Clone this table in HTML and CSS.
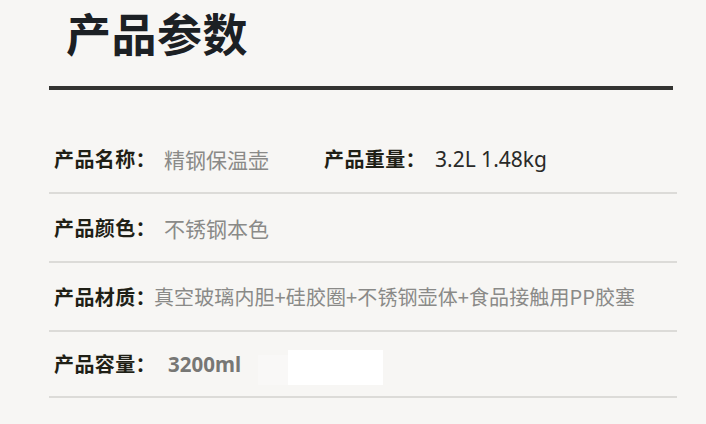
FILE: index.html
```html
<!DOCTYPE html>
<html lang="zh-CN">
<head>
<meta charset="utf-8">
<title>产品参数</title>
<link rel="stylesheet" href="styles.css">
</head>
<body>
<div class="page">
  <h1 class="title">产品参数</h1>
  <div class="rule"></div>
  <div class="rows">
    <div class="row">
      <div class="pair pair-first">
        <span class="label">产品名称：</span><span class="value">精钢保温壶</span>
      </div>
      <div class="pair">
        <span class="label">产品重量：</span><span class="value num">3.2L 1.48kg</span>
      </div>
    </div>
    <div class="row">
      <span class="label">产品颜色：</span><span class="value">不锈钢本色</span>
    </div>
    <div class="row">
      <span class="label">产品材质：</span><span class="value tight">真空玻璃内胆+硅胶圈+不锈钢壶体+食品接触用PP胶塞</span>
    </div>
    <div class="row row-last">
      <span class="label">产品容量：</span><span class="value bold">3200ml</span>
      <span class="patch-faint"></span><span class="patch-white"></span>
    </div>
  </div>
</div>
</body>
</html>
```
FILE: styles.css
```css
html, body {
  margin: 0;
  padding: 0;
}
body {
  background: #f7f6f4;
  font-family: "Noto Sans CJK SC", "Noto Sans", sans-serif;
  width: 706px;
  height: 424px;
  overflow: hidden;
}
.page {
  padding: 0 29px 0 49px;
}
.title {
  margin: 0;
  padding: 10px 0 0 17px;
  font-size: 45px;
  line-height: 46px;
  font-weight: 700;
  color: #1c2024;
  letter-spacing: 0.5px;
}
.rule {
  margin-top: 30px;
  width: 624px;
  height: 4px;
  background: #333331;
}
.rows {
  margin-top: 35px;
}
.row {
  display: flex;
  align-items: center;
  height: 67px;
  border-bottom: 2px solid #dcdbd8;
  padding-left: 5px;
  font-size: 20px;
  line-height: 24px;
}
.row-last {
  height: 64px;
}
.pair {
  display: flex;
  align-items: center;
}
.pair-first {
  width: 270px;
}
.label {
  font-weight: 700;
  color: #1f1f16;
  letter-spacing: 0.4px;
}
.value {
  color: #8a8a88;
  margin-left: 8px;
  font-size: 21px;
}
.value.tight {
  margin-left: -2px;
  font-size: 20px;
  letter-spacing: 0.1px;
}
.value.num {
  font-family: "Noto Sans", sans-serif;
  color: #2a2a28;
  margin-left: 9px;
  font-size: 21px;
}
.value.bold {
  font-family: "Noto Sans", sans-serif;
  font-weight: 700;
  color: #777775;
  margin-left: 12px;
  font-size: 20.5px;
}
.patch-faint {
  align-self: flex-end;
  margin: 0 0 11px 17px;
  width: 30px;
  height: 30px;
  background: #f9f8f7;
}
.patch-white {
  margin-top: 6px;
  width: 95px;
  height: 35px;
  background: #ffffff;
}
```
